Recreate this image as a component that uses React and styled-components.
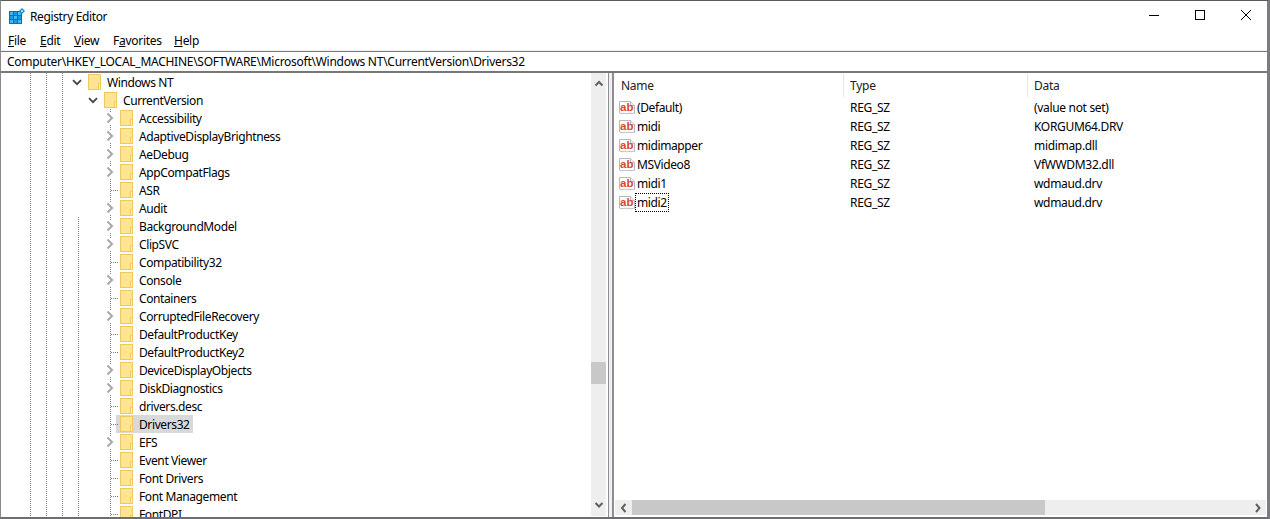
import React from "react";
import styled, { createGlobalStyle } from "styled-components";

const Global = createGlobalStyle`
  html, body { margin: 0; padding: 0; background: #fff; overflow: hidden; }
  * { box-sizing: border-box; }
`;

const Window = styled.div`
  width: 1270px; height: 519px;
  display: flex; flex-direction: column;
  background: #fff;
  border-top: 1px solid #5a5a5a;
  border-left: 1px solid #8a8a8a;
  border-right: 3px solid #7c7c80;
  border-bottom: 2px solid #6e6e72;
  font-family: "Noto Sans", "Open Sans", sans-serif;
  font-size: 12px; color: #000;
  overflow: hidden;
`;
const TitleBar = styled.div`
  height: 30px; flex: none;
  display: flex; align-items: center;
  padding-left: 8px;
  margin-right: -2px;
`;
const AppTitle = styled.span`
  margin-left: 5px; flex: 1; letter-spacing: -0.37px;
`;
const WinButton = styled.div`
  width: 46px; height: 30px; display: flex; align-items: center; justify-content: center; margin-top: -2px;
`;
const MenuBar = styled.div`
  height: 20px; flex: none; display: flex; align-items: center; padding-left: 7px;
  border-bottom: 1px solid #f0f0f0;
`;
const MenuItem = styled.span`
  width: ${p => p.$w}px; letter-spacing: -0.28px;
  u { text-underline-offset: 1px; }
`;
const AddressBar = styled.div`
  height: 22px; flex: none; display: flex; align-items: center; padding-left: 6px;
  border-top: 1px solid #77777a;
  border-bottom: 2px solid #77777a;
  letter-spacing: -0.27px;
`;
const Panes = styled.div`
  flex: 1; min-height: 0; display: flex;
`;
const TreePane = styled.div`
  width: 605px; flex: none; display: flex; 
`;
const TreeList = styled.div`
  flex: 1; min-width: 0; overflow: hidden; padding-left: 21px;
`;
const Row = styled.div`
  height: 18px; display: flex; align-items: center;
`;
const Guide = styled.span`
  width: 16px; height: 18px; flex: none;
  background-image: ${p => p.$on === false ? "none" : "linear-gradient(#7c7c7c 50%, transparent 50%)"};
  background-size: 1px 2px;
  background-position: 8px 0;
  background-repeat: repeat-y;
`;
const Branch = styled(Guide)`
  position: relative;
  ${p => p.$leaf && `
    &::after {
      content: ""; position: absolute; left: 9px; top: 9px; width: 7px; height: 1px;
      background-image: linear-gradient(90deg, #7c7c7c 50%, transparent 50%);
      background-size: 2px 1px;
    }
  `}
`;
const ChevronBox = styled.span`
  position: absolute; left: 2px; top: 3px; width: 12px; height: 12px;
  background: #fff; display: flex; align-items: center; justify-content: center;
`;
const ExpandCell = styled.span`
  width: 16px; height: 18px; flex: none; display: flex; align-items: center; justify-content: center;
  padding-right: 2px;
`;
const Node = styled.div`
  margin-left: ${p => p.$sel ? "-2px" : "2px"};
  padding: 0 ${p => p.$sel ? "3px" : "0"} 0 ${p => p.$sel ? "4px" : "0"};
  height: 18px; display: flex; align-items: center;
  background: ${p => p.$sel ? "#d9d9d9" : "transparent"};
`;
const NodeLabel = styled.span`
  margin-left: 6px; white-space: nowrap; letter-spacing: -0.39px;
`;
const VScroll = styled.div`
  width: 15px; flex: none; margin-bottom: 1px; background: #eeeeee;
  display: flex; flex-direction: column; align-items: center; justify-content: space-between;
  position: relative;
  padding: 6px 0;
`;
const VThumb = styled.div`
  position: absolute; top: 289px; left: 0; width: 15px; height: 22px; background: #c8c8c8;
`;
const Splitter = styled.div`
  width: 8px; flex: none; display: flex; padding-left: 2px;
  &::before { content: ""; width: 6px; background: #f0f0f0; border-left: 1px solid #8d8d93; border-right: 2px solid #8d8d93; }
`;
const ListPane = styled.div`
  flex: 1; min-width: 0; display: flex; flex-direction: column; padding-left: 1px;
`;
const Header = styled.div`
  height: 25px; flex: none; display: flex; align-items: flex-start; color: #222;
`;
const HeadCell = styled.div`
  width: ${p => p.$w}px; height: 23px; padding: 0 0 0 6px; display: flex; align-items: center;
  margin-top: 1px; letter-spacing: -0.25px;
  border-right: ${p => p.$last ? "none" : "1px solid #e5e5e5"};
`;
const ListBody = styled.div`
  flex: 1; min-height: 0;
`;
const ListRow = styled.div`
  height: 19px; display: flex; align-items: center; 
`;
const NameCell = styled.div`
  width: 229px; display: flex; align-items: center; padding-left: 4px; flex: none;
`;
const CellText = styled.span`
  padding: 0 1px;
  height: 19px; line-height: 17px; white-space: nowrap; letter-spacing: -0.4px;
  border: 1px ${p => p.$focus ? "dotted #000" : "solid transparent"};
`;
const ColCell = styled.div`
  width: ${p => p.$w}px; flex: none; padding-left: ${p => p.$p}px; letter-spacing: -0.32px;
`;
const HScroll = styled.div`
  height: 15px; flex: none; margin: 0 1px 2px 0; background: #eeeeee;
  display: flex; align-items: center;
`;
const ArrowBox = styled.div`
  width: 17px; height: 15px; flex: none; display: flex; align-items: center; justify-content: center;
`;
const HThumb = styled.div`
  width: 413px; height: 15px; background: #c8c8c8; flex: none;
`;
const HRest = styled.div`flex: 1;`;

const Folder = () => (
  <svg width="13" height="16" viewBox="0 0 13 16">
    <rect x="0.5" y="0.5" width="12" height="15" fill="#ffe591" stroke="#f0c95e" />
    <rect x="10.5" y="9.5" width="2" height="6" fill="#fff6cf" stroke="#f0c95e" />
  </svg>
);
const ChevronRight = () => (
  <svg width="8" height="12" viewBox="0 0 8 12"><path d="M1.5 1.5 6 6l-4.5 4.5" fill="none" stroke="#a8a8a8" strokeWidth="2" /></svg>
);
const ChevronDown = () => (
  <svg width="10" height="7" viewBox="0 0 10 7"><path d="M1 1.2 5 5.2l4-4" fill="none" stroke="#444" strokeWidth="1.8" /></svg>
);
const Arrow = ({ d }) => {
  const paths = {
    up: "M1.5 6.5 5 3l3.5 3.5", down: "M1.5 3 5 6.5 8.5 3",
    left: "M6.5 1 3 5l3.5 4", right: "M3 1l3.5 4L3 9",
  };
  return <svg width="10" height="10" viewBox="0 0 10 10"><path d={paths[d]} fill="none" stroke="#606060" strokeWidth="2" /></svg>;
};
const AppIcon = () => (
  <svg width="16" height="16" viewBox="0 0 16 16">
    <rect x="0" y="3" width="13" height="13" fill="#0f6fb3" />
    <rect x="1" y="4" width="3" height="3" fill="#38bdf8" /><rect x="5" y="4" width="3" height="3" fill="#1e96e0" /><rect x="9" y="4" width="3" height="3" fill="#38bdf8" />
    <rect x="1" y="8" width="3" height="3" fill="#1e96e0" /><rect x="5" y="8" width="3" height="3" fill="#38bdf8" /><rect x="9" y="8" width="3" height="3" fill="#1e96e0" />
    <rect x="1" y="12" width="3" height="3" fill="#38bdf8" /><rect x="5" y="12" width="3" height="3" fill="#1e96e0" /><rect x="9" y="12" width="3" height="3" fill="#38bdf8" />
    <path d="M13 0l3 3-3 3-3-3z" fill="#1a8ad4" /><rect x="12" y="2" width="2" height="2" fill="#9fdefc" />
  </svg>
);
const RegIcon = () => (
  <svg width="16" height="16" viewBox="0 0 16 16" style={{ flex: "none" }}>
    <path d="M0.5 1.5h11l4 4v8c-1.5-1-3 1-4.5 0s-3 1-4.5 0-3 1-4.5 0l-1.5-.5z" fill="#fff" stroke="#b8b8b8" />
    <path d="M11.5 1.5v4h4" fill="#f0f0f0" stroke="#b8b8b8" />
    <text x="1" y="10.5" fontFamily="Liberation Sans" fontWeight="700" fontSize="11.5" fill="#d8492a">ab</text>
  </svg>
);

const children = [
  ["Accessibility", 1], ["AdaptiveDisplayBrightness", 1], ["AeDebug", 1], ["AppCompatFlags", 1], ["ASR", 0],
  ["Audit", 1], ["BackgroundModel", 1], ["ClipSVC", 1], ["Compatibility32", 0], ["Console", 1], ["Containers", 0],
  ["CorruptedFileRecovery", 1], ["DefaultProductKey", 0], ["DefaultProductKey2", 0], ["DeviceDisplayObjects", 1],
  ["DiskDiagnostics", 1], ["drivers.desc", 0], ["Drivers32", 0], ["EFS", 1], ["Event Viewer", 0], ["Font Drivers", 0],
  ["Font Management", 0], ["FontDPI", 0],
];
const values = [
  ["(Default)", "(value not set)"], ["midi", "KORGUM64.DRV"], ["midimapper", "midimap.dll"],
  ["MSVideo8", "VfWWDM32.dll"], ["midi1", "wdmaud.drv"], ["midi2", "wdmaud.drv"],
];

export default function App() {
  return (
    <Window>
      <Global />
      <TitleBar>
        <AppIcon />
        <AppTitle>Registry Editor</AppTitle>
        <WinButton><svg width="10" height="10"><path d="M0 5.5h10" stroke="#000" /></svg></WinButton>
        <WinButton><svg width="10" height="10"><rect x="0.5" y="0.5" width="9" height="9" fill="none" stroke="#000" /></svg></WinButton>
        <WinButton><svg width="10" height="10"><path d="M0 0l10 10M10 0 0 10" stroke="#000" /></svg></WinButton>
      </TitleBar>
      <MenuBar>
        <MenuItem $w={32}><u>F</u>ile</MenuItem>
        <MenuItem $w={34}><u>E</u>dit</MenuItem>
        <MenuItem $w={39}><u>V</u>iew</MenuItem>
        <MenuItem $w={61}>F<u>a</u>vorites</MenuItem>
        <MenuItem $w={30}><u>H</u>elp</MenuItem>
      </MenuBar>
      <AddressBar>Computer\HKEY_LOCAL_MACHINE\SOFTWARE\Microsoft\Windows NT\CurrentVersion\Drivers32</AddressBar>
      <Panes>
        <TreePane>
          <TreeList>
            <Row>
              <Guide /><Guide /><Guide />
              <ExpandCell><ChevronDown /></ExpandCell>
              <Node><Folder /><NodeLabel>Windows NT</NodeLabel></Node>
            </Row>
            <Row>
              <Guide /><Guide /><Guide /><Guide $on={false} />
              <ExpandCell><ChevronDown /></ExpandCell>
              <Node><Folder /><NodeLabel>CurrentVersion</NodeLabel></Node>
            </Row>
            {children.map(([name, exp], i) => (
              <Row key={name}>
                <Guide /><Guide /><Guide /><Guide $on={i >= 6} /><Guide $on={false} />
                <Branch $leaf={!exp}>{exp ? <ChevronBox><ChevronRight /></ChevronBox> : null}</Branch>
                <Node $sel={name === "Drivers32"}><Folder /><NodeLabel>{name}</NodeLabel></Node>
              </Row>
            ))}
          </TreeList>
          <VScroll>
            <Arrow d="up" />
            <VThumb />
            <Arrow d="down" />
          </VScroll>
        </TreePane>
        <Splitter />
        <ListPane>
          <Header>
            <HeadCell $w={229}>Name</HeadCell>
            <HeadCell $w={184}>Type</HeadCell>
            <HeadCell $w={230} $last>Data</HeadCell>
          </Header>
          <ListBody>
            {values.map(([n, d], i) => (
              <ListRow key={n}>
                <NameCell><RegIcon /><CellText $focus={i === 5}>{n}</CellText></NameCell>
                <ColCell $w={184} $p={6}>REG_SZ</ColCell>
                <ColCell $w={230} $p={6}>{d}</ColCell>
              </ListRow>
            ))}
          </ListBody>
          <HScroll>
            <ArrowBox><Arrow d="left" /></ArrowBox>
            <HThumb />
            <HRest />
            <ArrowBox><Arrow d="right" /></ArrowBox>
          </HScroll>
        </ListPane>
      </Panes>
    </Window>
  );
}
